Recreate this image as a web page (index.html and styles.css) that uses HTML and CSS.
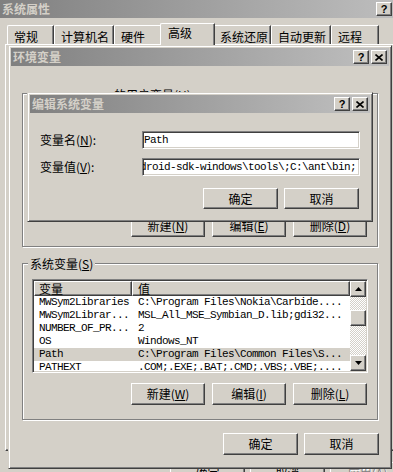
FILE: index.html
```html
<!DOCTYPE html>
<html>
<head>
<meta charset="utf-8">
<title>系统属性</title>
<link rel="stylesheet" href="styles.css">
</head>
<body>

<!-- 系统属性 -->
<div class="win win-sys">
    <div class="caption">
        <span class="caption-text">系统属性</span>
        <span class="cap-btns">
            <span class="cap-btn raised">?</span>
            <span class="cap-btn raised"><svg width="8" height="7" viewBox="0 0 8 7"><path d="M0.5 0.5 L7.5 6.5 M7.5 0.5 L0.5 6.5" stroke="#000" stroke-width="1.6"/></svg></span>
        </span>
    </div>
    <div class="tabs">
        <div class="tab" style="width:47px">常规</div>
        <div class="tab" style="width:60px">计算机名</div>
        <div class="tab" style="width:48px">硬件</div>
        <div class="tab tab-on" style="width:55px">高级</div>
        <div class="tab" style="width:58px">系统还原</div>
        <div class="tab" style="width:60px">自动更新</div>
        <div class="tab" style="width:48px">远程</div>
    </div>
    <div class="tab-panel"></div>
    <div class="sys-buttons">
        <div class="btn raised">确定</div>
        <div class="btn raised">取消</div>
        <div class="btn raised disabled">应用(<u>A</u>)</div>
    </div>
</div>

<!-- 环境变量 -->
<div class="win win-env">
    <div class="caption">
        <span class="caption-text">环境变量</span>
        <span class="cap-btns">
            <span class="cap-btn raised">?</span>
            <span class="cap-btn raised"><svg width="8" height="7" viewBox="0 0 8 7"><path d="M0.5 0.5 L7.5 6.5 M7.5 0.5 L0.5 6.5" stroke="#000" stroke-width="1.6"/></svg></span>
        </span>
    </div>
    <div class="env-body">
        <div class="group group-user">
            <div class="group-title group-title-user"><span class="latin">Administrator </span>的用户变量(<u>U</u>)</div>
            <div class="list sunken">
                <div class="list-view"></div>
            </div>
            <div class="group-buttons">
                <div class="btn raised">新建(<u>N</u>)</div>
                <div class="btn raised">编辑(<u>E</u>)</div>
                <div class="btn raised">删除(<u>D</u>)</div>
            </div>
        </div>

        <div class="group group-sys">
            <div class="group-title">系统变量(<u>S</u>)</div>
            <div class="list sunken">
                <div class="list-view">
                    <div class="list-head">
                        <span class="head-cell raised c1">变量</span>
                        <span class="head-cell raised c2">值</span>
                    </div>
                    <div class="row"><span class="c1">MWSym2Libraries</span><span class="c2">C:\Program Files\Nokia\Carbide....</span></div>
                    <div class="row"><span class="c1">MWSym2Librar...</span><span class="c2">MSL_All_MSE_Symbian_D.lib;gdi32...</span></div>
                    <div class="row"><span class="c1">NUMBER_OF_PR...</span><span class="c2">2</span></div>
                    <div class="row"><span class="c1">OS</span><span class="c2">Windows_NT</span></div>
                    <div class="row sel"><span class="c1">Path</span><span class="c2">C:\Program Files\Common Files\S...</span></div>
                    <div class="row"><span class="c1">PATHEXT</span><span class="c2">.COM;.EXE;.BAT;.CMD;.VBS;.VBE;....</span></div>
                </div>
                <div class="scrollbar">
                    <div class="sb-btn raised"><svg width="7" height="4" viewBox="0 0 7 4"><path d="M3.5 0 L7 4 L0 4 Z" fill="#000"/></svg></div>
                    <div class="sb-thumb raised"></div>
                    <div class="sb-btn sb-down raised"><svg width="7" height="4" viewBox="0 0 7 4"><path d="M0 0 L7 0 L3.5 4 Z" fill="#000"/></svg></div>
                </div>
            </div>
            <div class="group-buttons">
                <div class="btn raised">新建(<u>W</u>)</div>
                <div class="btn raised">编辑(<u>I</u>)</div>
                <div class="btn raised">删除(<u>L</u>)</div>
            </div>
        </div>

        <div class="env-buttons">
            <div class="btn raised">确定</div>
            <div class="btn raised">取消</div>
        </div>
    </div>
</div>

<!-- 编辑系统变量 -->
<div class="win win-edit">
    <div class="caption">
        <span class="caption-text">编辑系统变量</span>
        <span class="cap-btns">
            <span class="cap-btn raised">?</span>
            <span class="cap-btn raised"><svg width="8" height="7" viewBox="0 0 8 7"><path d="M0.5 0.5 L7.5 6.5 M7.5 0.5 L0.5 6.5" stroke="#000" stroke-width="1.6"/></svg></span>
        </span>
    </div>
    <div class="edit-body">
        <div class="field-row">
            <span class="field-label">变量名(<u>N</u>):</span>
            <div class="field sunken">Path</div>
        </div>
        <div class="field-row">
            <span class="field-label">变量值(<u>V</u>):</span>
            <div class="field sunken"><span class="field-scroll">android-sdk-windows\tools\;C:\ant\bin;</span></div>
        </div>
        <div class="edit-buttons">
            <div class="btn raised">确定</div>
            <div class="btn raised">取消</div>
        </div>
    </div>
</div>

</body>
</html>
```

FILE: styles.css
```css
html, body {
    margin: 0;
    padding: 0;
}

body {
    position: relative;
    width: 393px;
    height: 472px;
    overflow: hidden;
    background: #d4d0c8;
    color: #000;
    font-family: "Noto Sans CJK SC", "Liberation Sans", sans-serif;
    font-size: 12px;
    line-height: 14px;
}

u {
    text-decoration: underline;
}

/* windows */
.win {
    position: absolute;
    box-sizing: border-box;
    padding: 2px;
    background: #d4d0c8;
    border: 1px solid;
    border-color: #d4d0c8 #404040 #404040 #d4d0c8;
    box-shadow: inset 1px 1px #fff, inset -1px -1px #808080;
}

.win-sys {
    left: -3px;
    top: -3px;
    width: 418px;
    height: 500px;
}

.win-env {
    left: 8px;
    top: 45px;
    width: 384px;
    height: 424px;
}

.win-edit {
    left: 27px;
    top: 92px;
    width: 346px;
    height: 130px;
}

.caption {
    display: flex;
    align-items: center;
    height: 18px;
    padding: 0 2px;
    background: linear-gradient(to right, #808080, #c0c0c0);
    color: #d4d0c8;
    font-weight: bold;
    line-height: 18px;
}

.cap-btns {
    display: flex;
    gap: 2px;
    margin-left: auto;
}

.cap-btn {
    width: 16px;
    height: 14px;
    display: flex;
    align-items: center;
    justify-content: center;
    color: #000;
    font: bold 11px/1 "Liberation Sans", sans-serif;
}

/* 3d edges */
.raised {
    box-sizing: border-box;
    background: #d4d0c8;
    border: 1px solid;
    border-color: #fff #404040 #404040 #fff;
    box-shadow: inset -1px -1px #808080;
}

.sunken {
    box-sizing: border-box;
    padding: 1px;
    background: #fff;
    border: 1px solid;
    border-color: #808080 #fff #fff #808080;
    box-shadow: inset 1px 1px #404040, inset -1px -1px #d4d0c8;
}

.btn {
    width: 75px;
    height: 22px;
    display: flex;
    align-items: center;
    justify-content: center;
}

.btn.disabled {
    color: #808080;
    text-shadow: 1px 1px #fff;
}

/* tabs */
.tabs {
    display: flex;
    align-items: flex-end;
    height: 21px;
    margin-top: 5px;
    padding-left: 7px;
}

.tab {
    box-sizing: border-box;
    height: 19px;
    padding: 4px 0 0 6px;
    border-top: 1px solid #fff;
    border-left: 1px solid #fff;
    border-right: 1px solid #404040;
    border-top-left-radius: 2px;
    box-shadow: inset -1px 0 #808080;
    white-space: nowrap;
}

.tab-on {
    position: relative;
    z-index: 1;
    height: 22px;
    margin: 0 -2px -1px -2px;
    padding-top: 2px;
    padding-left: 7px;
    background: #d4d0c8;
}

.tab-panel {
    height: 407px;
    margin: 0 5px;
    box-sizing: border-box;
    border: 1px solid;
    border-color: #fff #404040 #404040 #fff;
    box-shadow: inset -1px -1px #808080;
}

.sys-buttons {
    display: flex;
    justify-content: flex-end;
    gap: 5px;
    margin-top: 11px;
    padding-right: 7px;
}

/* environment dialog */
.env-body {
    padding-left: 11px;
}

.group {
    box-sizing: border-box;
    width: 356px;
    border: 1px solid #808080;
    box-shadow: inset 1px 1px #fff, 1px 1px #fff;
}

.group-user {
    height: 154px;
    margin-top: 27px;
}

.group-sys {
    height: 157px;
    margin-top: 16px;
}

.group-title {
    width: max-content;
    margin: -7px 0 0 5px;
    padding: 0 2px;
    background: #d4d0c8;
    line-height: 14px;
}

.group-title-user {
    margin-top: -6px;
    margin-bottom: -1px;
}

.latin {
    font-family: "Liberation Mono", monospace;
    font-size: 11px;
    letter-spacing: -0.6px;
}

.list {
    display: flex;
    width: 336px;
    height: 94px;
    margin: 8px 0 0 9px;
}

.list-view {
    flex: 1;
    overflow: hidden;
    background: #fff;
}

.list-head {
    display: flex;
    height: 15px;
}

.head-cell {
    height: 15px;
    line-height: 13px;
}

.list-head .c1 {
    width: 98px;
    padding-left: 4px;
}

.list-head .c2 {
    flex: 1;
    padding-left: 5px;
}

.row {
    display: flex;
    height: 13px;
    font-family: "Liberation Mono", monospace;
    font-size: 11px;
    line-height: 13px;
    letter-spacing: -0.6px;
    white-space: nowrap;
}

.row .c1 {
    box-sizing: border-box;
    width: 98px;
    padding-left: 5px;
    overflow: hidden;
}

.row .c2 {
    padding-left: 6px;
}

.row.sel {
    background: #d4d0c8;
}

.scrollbar {
    display: flex;
    flex-direction: column;
    width: 16px;
    background: repeating-conic-gradient(#fff 0 25%, #d4d0c8 0 50%) 0 0 / 2px 2px;
}

.sb-btn {
    height: 16px;
    display: flex;
    align-items: center;
    justify-content: center;
}

.sb-thumb {
    height: 16px;
    margin-top: 13px;
}

.sb-down {
    margin-top: auto;
}

.group-buttons {
    display: flex;
    justify-content: flex-end;
    gap: 7px;
    margin-top: 10px;
    padding-right: 10px;
}

.group-buttons .btn {
    width: 74px;
}

.env-buttons {
    display: flex;
    justify-content: flex-end;
    gap: 6px;
    margin-top: 13px;
    padding-right: 10px;
}

/* edit dialog */
.edit-body {
    padding: 18px 0 0 10px;
}

.field-row {
    display: flex;
    align-items: center;
    height: 18px;
}

.field-row + .field-row {
    margin-top: 9px;
}

.field-label {
    width: 102px;
}

.field {
    width: 218px;
    height: 18px;
    overflow: hidden;
    white-space: nowrap;
    font-family: "Liberation Mono", monospace;
    font-size: 11px;
    line-height: 14px;
    letter-spacing: -0.6px;
}

.field-scroll {
    display: inline-block;
    margin-left: -16px;
}

.edit-buttons {
    display: flex;
    justify-content: flex-end;
    gap: 6px;
    margin-top: 12px;
    padding-right: 11px;
}

.edit-buttons .btn {
    height: 21px;
}
```
